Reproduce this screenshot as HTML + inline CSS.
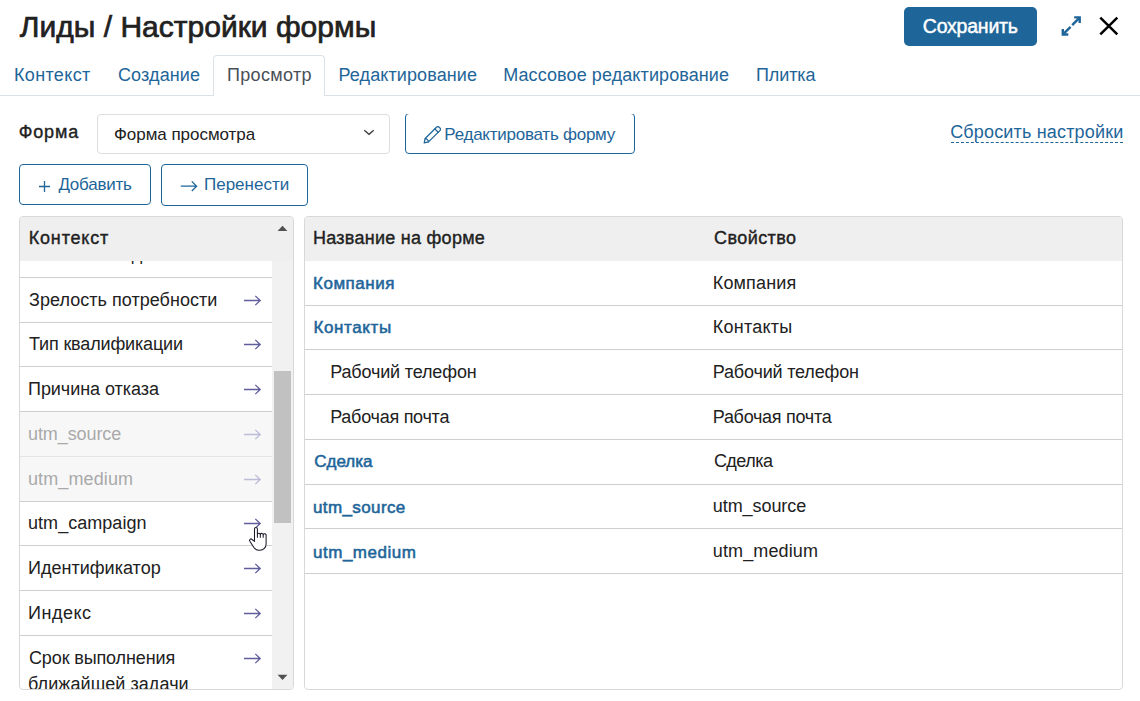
<!DOCTYPE html>
<html lang="ru"><head><meta charset="utf-8"><title>Лиды / Настройки формы</title>
<style>
*{box-sizing:border-box;margin:0;padding:0}
html,body{width:1140px;height:701px;overflow:hidden;background:#fff}
body{font-family:"Liberation Sans",sans-serif;color:#212121;position:relative}
.abs{position:absolute}
.t{position:absolute;white-space:nowrap;line-height:20px}
.tabline{left:0;top:95px;width:1140px;height:1px;background:#dae1e8}
.tabact{left:213px;top:55px;width:112px;height:41px;border:1px solid #dae1e8;border-bottom:none;border-radius:4px 4px 0 0;background:#fff}
.btn-save{left:904px;top:7px;width:133px;height:39px;background:#1e6599;border-radius:5px}
.select{left:97px;top:114px;width:293px;height:40px;border:1px solid #ddd;border-radius:4px;background:#fff}
.btn-o{border:1px solid #1e6599;border-radius:4px;background:#fff}
.panel{border:1px solid #d8d8d8;border-radius:4px;background:#fff;overflow:hidden}
.phead{background:#efefef}
</style></head><body>
<div class="abs btn-save"></div>
<svg class="abs" style="left:1061px;top:16px" width="20" height="20" viewBox="0 0 20 20"><g stroke="#1e6599" stroke-width="2.400" fill="none" stroke-linejoin="miter"><path d="M13.200 1.400H18.700V6.900"/><path d="M18.300 1.800L11.200 9.100"/><path d="M1.800 13V18.500H7.300"/><path d="M2.200 18.100L9.600 10.900"/></g></svg>
<svg class="abs" style="left:1098px;top:16px" width="22" height="21" viewBox="0 0 22 21"><path d="M2.300 1.700L19.300 18.400M19.300 1.700L2.300 18.400" stroke="#000" stroke-width="2.500" fill="none"/></svg>
<div class="abs tabline"></div>
<div class="abs tabact"></div>
<div class="abs select"></div>
<svg class="abs" style="left:363px;top:127.800px" width="12" height="8" viewBox="0 0 12 8"><path d="M1.300 2.200L6 6.300L10.700 2.200" stroke="#3c3c3c" stroke-width="1.300" fill="none"/></svg>
<div class="abs" style="left:405px;top:113px;width:230px;height:41px;overflow:hidden;clip-path:inset(1px 0 0 0)"><div class="abs btn-o" style="left:0;top:0;width:230px;height:41px"></div></div>
<svg class="abs" style="left:423px;top:125px" width="20" height="20" viewBox="0 0 20 20"><g transform="translate(0.5,0.5)" stroke="#1e6599" stroke-width="1.250" fill="none" stroke-linejoin="round" stroke-linecap="round"><path d="M0.700 17.300L1.700 13L13 1.700a1.900 1.900 0 0 1 2.700 0l0.700 0.700a1.900 1.900 0 0 1 0 2.700L5 16.400Z"/><path d="M11.300 3.400L14.700 6.800"/><path d="M1.700 13C3.200 13 5 14.800 5 16.400"/></g></svg>
<div class="abs" style="left:951px;top:142px;width:172px;height:0;border-top:1px dashed #1e6599"></div>
<div class="abs btn-o" style="left:19px;top:164px;width:132px;height:41px"></div>
<div class="abs btn-o" style="left:161px;top:164px;width:147px;height:42px"></div>
<svg class="abs" style="left:39px;top:181px" width="11" height="11" viewBox="0 0 11 11"><path d="M5.500 0V11M0 5.500H11" stroke="#1e6599" stroke-width="1.300" fill="none"/></svg>
<svg class="abs" style="left:179.800px;top:179.500px" width="18" height="12" viewBox="0 0 18 12"><path d="M0.800 6.200H16.500M11.800 1.400L16.600 6.200L11.800 11" stroke="#1e6599" stroke-width="1.300" fill="none"/></svg>
<div class="t" id="title" style="left:19.85px;top:10px;line-height:33px;font-size:30px;color:#212121;letter-spacing:0.008px;-webkit-text-stroke:0.7px #212121">Лиды / Настройки формы</div>
<div class="t" id="save" style="left:922.83px;top:15px;line-height:22px;font-size:19.5px;color:#fff;letter-spacing:-0.224px;-webkit-text-stroke:0.45px #fff">Сохранить</div>
<div class="t" id="t1" style="left:14.00px;top:65px;line-height:20px;font-size:18px;color:#1e6599;letter-spacing:0.348px">Контекст</div>
<div class="t" id="t2" style="left:118.00px;top:65px;line-height:20px;font-size:18px;color:#1e6599;letter-spacing:0.118px">Создание</div>
<div class="t" id="t3" style="left:227.00px;top:65px;line-height:20px;font-size:18px;color:#495057;letter-spacing:0.330px">Просмотр</div>
<div class="t" id="t4" style="left:338.50px;top:65px;line-height:20px;font-size:18px;color:#1e6599;letter-spacing:0.107px">Редактирование</div>
<div class="t" id="t5" style="left:503.20px;top:65px;line-height:20px;font-size:18px;color:#1e6599;letter-spacing:0.095px">Массовое редактирование</div>
<div class="t" id="t6" style="left:756.00px;top:65px;line-height:20px;font-size:18px;color:#1e6599;letter-spacing:-0.102px">Плитка</div>
<div class="t" id="lbl" style="left:18.69px;top:122px;line-height:20px;font-size:18px;color:#212121;letter-spacing:0.860px;-webkit-text-stroke:0.38px #212121">Форма</div>
<div class="t" id="seltxt" style="left:113.90px;top:125px;line-height:19px;font-size:17px;color:#212121;letter-spacing:-0.030px">Форма просмотра</div>
<div class="t" id="edit" style="left:444.30px;top:125px;line-height:19px;font-size:17px;color:#1e6599;letter-spacing:-0.249px">Редактировать форму</div>
<div class="t" id="reset" style="left:950.20px;top:122px;line-height:20px;font-size:18px;color:#1e6599;letter-spacing:0.167px">Сбросить настройки</div>
<div class="t" id="add" style="left:58.40px;top:175px;line-height:19px;font-size:17px;color:#1e6599;letter-spacing:-0.225px">Добавить</div>
<div class="t" id="move" style="left:204.00px;top:175px;line-height:19px;font-size:17px;color:#1e6599;letter-spacing:-0.001px">Перенести</div>

<div class="abs panel" style="left:19px;top:216px;width:275px;height:474px" id="lp">
  <div class="abs" style="left:0;top:44px;width:252px;height:428px;overflow:hidden" id="lpb">
  <div class="abs" style="left:0;top:151px;width:252px;height:89px;background:#f7f7f7"></div>
<div class="abs" style="left:0;top:16px;width:252px;height:1px;background:#cfcfcf"></div>
<div class="abs" style="left:0;top:61px;width:252px;height:1px;background:#cfcfcf"></div>
<div class="abs" style="left:0;top:105px;width:252px;height:1px;background:#cfcfcf"></div>
<div class="abs" style="left:0;top:150px;width:252px;height:1px;background:#cfcfcf"></div>
<div class="abs" style="left:0;top:195px;width:252px;height:1px;background:#e4e4e4"></div>
<div class="abs" style="left:0;top:240px;width:252px;height:1px;background:#cfcfcf"></div>
<div class="abs" style="left:0;top:284px;width:252px;height:1px;background:#cfcfcf"></div>
<div class="abs" style="left:0;top:329px;width:252px;height:1px;background:#cfcfcf"></div>
<div class="abs" style="left:0;top:374px;width:252px;height:1px;background:#cfcfcf"></div>
<svg class="abs" style="left:223.90px;top:33.70px" width="18" height="11" viewBox="0 0 18 11"><path d="M0 5.500H16.200M11.300 0.900L16.200 5.500L11.300 10.100" stroke="#5f5d9c" stroke-width="1.300" fill="none" stroke-linejoin="miter"/></svg>
<svg class="abs" style="left:223.90px;top:78.45px" width="18" height="11" viewBox="0 0 18 11"><path d="M0 5.500H16.200M11.300 0.900L16.200 5.500L11.300 10.100" stroke="#5f5d9c" stroke-width="1.300" fill="none" stroke-linejoin="miter"/></svg>
<svg class="abs" style="left:223.90px;top:123.20px" width="18" height="11" viewBox="0 0 18 11"><path d="M0 5.500H16.200M11.300 0.900L16.200 5.500L11.300 10.100" stroke="#5f5d9c" stroke-width="1.300" fill="none" stroke-linejoin="miter"/></svg>
<svg class="abs" style="left:223.90px;top:167.95px" width="18" height="11" viewBox="0 0 18 11"><path d="M0 5.500H16.200M11.300 0.900L16.200 5.500L11.300 10.100" stroke="#bcbbd8" stroke-width="1.300" fill="none" stroke-linejoin="miter"/></svg>
<svg class="abs" style="left:223.90px;top:212.70px" width="18" height="11" viewBox="0 0 18 11"><path d="M0 5.500H16.200M11.300 0.900L16.200 5.500L11.300 10.100" stroke="#bcbbd8" stroke-width="1.300" fill="none" stroke-linejoin="miter"/></svg>
<svg class="abs" style="left:223.90px;top:257.45px" width="18" height="11" viewBox="0 0 18 11"><path d="M0 5.500H16.200M11.300 0.900L16.200 5.500L11.300 10.100" stroke="#5f5d9c" stroke-width="1.300" fill="none" stroke-linejoin="miter"/></svg>
<svg class="abs" style="left:223.90px;top:302.20px" width="18" height="11" viewBox="0 0 18 11"><path d="M0 5.500H16.200M11.300 0.900L16.200 5.500L11.300 10.100" stroke="#5f5d9c" stroke-width="1.300" fill="none" stroke-linejoin="miter"/></svg>
<svg class="abs" style="left:223.90px;top:346.95px" width="18" height="11" viewBox="0 0 18 11"><path d="M0 5.500H16.200M11.300 0.900L16.200 5.500L11.300 10.100" stroke="#5f5d9c" stroke-width="1.300" fill="none" stroke-linejoin="miter"/></svg>
<svg class="abs" style="left:223.90px;top:391.70px" width="18" height="11" viewBox="0 0 18 11"><path d="M0 5.500H16.200M11.300 0.900L16.200 5.500L11.300 10.100" stroke="#5f5d9c" stroke-width="1.300" fill="none" stroke-linejoin="miter"/></svg>
  <div class="t" id="l0" style="left:9.00px;top:-17px;line-height:20px;font-size:18px;color:#212121;letter-spacing:0.041px">Источник лида</div>
<div class="t" id="l1" style="left:9.00px;top:29px;line-height:20px;font-size:18px;color:#212121;letter-spacing:0.036px">Зрелость потребности</div>
<div class="t" id="l2" style="left:9.00px;top:73px;line-height:20px;font-size:18px;color:#212121;letter-spacing:-0.155px">Тип квалификации</div>
<div class="t" id="l3" style="left:8.00px;top:118px;line-height:20px;font-size:18px;color:#212121;letter-spacing:-0.045px">Причина отказа</div>
<div class="t" id="l4" style="left:8.00px;top:163px;line-height:20px;font-size:18px;color:#a9a9a9;letter-spacing:-0.087px">utm_source</div>
<div class="t" id="l5" style="left:8.00px;top:208px;line-height:20px;font-size:18px;color:#a9a9a9;letter-spacing:0.106px">utm_medium</div>
<div class="t" id="l6" style="left:8.00px;top:252px;line-height:20px;font-size:18px;color:#212121;letter-spacing:0.041px">utm_campaign</div>
<div class="t" id="l7" style="left:8.00px;top:297px;line-height:20px;font-size:18px;color:#212121;letter-spacing:0.017px">Идентификатор</div>
<div class="t" id="l8" style="left:8.00px;top:342px;line-height:20px;font-size:18px;color:#212121;letter-spacing:0.506px">Индекс</div>
<div class="t" id="l9" style="left:9.00px;top:387px;line-height:20px;font-size:18px;color:#212121;letter-spacing:-0.129px">Срок выполнения</div>
<div class="t" id="l10" style="left:8.00px;top:413px;line-height:20px;font-size:18px;color:#212121;letter-spacing:0.078px">ближайшей задачи</div>
  </div>
  <div class="abs phead" style="left:0;top:0;width:273px;height:44px"></div>
  <div class="abs" style="left:252px;top:44px;width:21px;height:430px;background:#f1f1f1"></div>
  <div class="abs" style="left:254px;top:154px;width:17px;height:152px;background:#c1c1c1"></div>
  <svg class="abs" style="left:257px;top:8px" width="11" height="7" viewBox="0 0 11 7"><path d="M0.600 6L5.500 0.800L10.400 6Z" fill="#505050"/></svg>
  <svg class="abs" style="left:257px;top:457px" width="11" height="7" viewBox="0 0 11 7"><path d="M0.600 0.800L5.500 6L10.400 0.800Z" fill="#505050"/></svg>
  <div class="t" id="lh" style="left:8.69px;top:11px;line-height:20px;font-size:18px;color:#212121;letter-spacing:0.836px;-webkit-text-stroke:0.38px #212121">Контекст</div>
</div>
<div class="abs panel" style="left:304px;top:216px;width:819px;height:474px" id="rp">
  <div class="abs phead" style="left:0;top:0;width:817px;height:44px"></div>
  <div class="abs" style="left:0;top:88px;width:817px;height:1px;background:#cfcfcf"></div>
<div class="abs" style="left:0;top:132px;width:817px;height:1px;background:#cfcfcf"></div>
<div class="abs" style="left:0;top:177px;width:817px;height:1px;background:#cfcfcf"></div>
<div class="abs" style="left:0;top:222px;width:817px;height:1px;background:#cfcfcf"></div>
<div class="abs" style="left:0;top:267px;width:817px;height:1px;background:#cfcfcf"></div>
<div class="abs" style="left:0;top:311px;width:817px;height:1px;background:#cfcfcf"></div>
<div class="abs" style="left:0;top:356px;width:817px;height:1px;background:#cfcfcf"></div>
  <div class="t" id="rh1" style="left:7.94px;top:11px;line-height:20px;font-size:18px;color:#212121;letter-spacing:0.267px;-webkit-text-stroke:0.38px #212121">Название на форме</div>
<div class="t" id="rh2" style="left:408.94px;top:11px;line-height:20px;font-size:18px;color:#212121;letter-spacing:0.442px;-webkit-text-stroke:0.38px #212121">Свойство</div>
<div class="t" id="a1" style="left:8.02px;top:57px;line-height:19px;font-size:17px;color:#1e6599;letter-spacing:0.516px;-webkit-text-stroke:0.55px #1e6599">Компания</div>
<div class="t" id="a2" style="left:8.38px;top:101px;line-height:19px;font-size:17px;color:#1e6599;letter-spacing:0.620px;-webkit-text-stroke:0.55px #1e6599">Контакты</div>
<div class="t" id="a3" style="left:25.25px;top:145px;line-height:20px;font-size:18px;color:#212121;letter-spacing:-0.152px">Рабочий телефон</div>
<div class="t" id="a4" style="left:25.20px;top:190px;line-height:20px;font-size:18px;color:#212121;letter-spacing:-0.255px">Рабочая почта</div>
<div class="t" id="a5" style="left:9.17px;top:235px;line-height:19px;font-size:17px;color:#1e6599;letter-spacing:0.027px;-webkit-text-stroke:0.55px #1e6599">Сделка</div>
<div class="t" id="a6" style="left:8.02px;top:281px;line-height:19px;font-size:17px;color:#1e6599;letter-spacing:0.382px;-webkit-text-stroke:0.55px #1e6599">utm_source</div>
<div class="t" id="a7" style="left:8.02px;top:326px;line-height:19px;font-size:17px;color:#1e6599;letter-spacing:0.512px;-webkit-text-stroke:0.55px #1e6599">utm_medium</div>
<div class="t" id="b1" style="left:407.75px;top:56px;line-height:20px;font-size:18px;color:#212121;letter-spacing:0.161px">Компания</div>
<div class="t" id="b2" style="left:407.75px;top:100px;line-height:20px;font-size:18px;color:#212121;letter-spacing:0.241px">Контакты</div>
<div class="t" id="b3" style="left:407.75px;top:145px;line-height:20px;font-size:18px;color:#212121;letter-spacing:-0.169px">Рабочий телефон</div>
<div class="t" id="b4" style="left:407.75px;top:190px;line-height:20px;font-size:18px;color:#212121;letter-spacing:-0.272px">Рабочая почта</div>
<div class="t" id="b5" style="left:408.90px;top:234px;line-height:20px;font-size:18px;color:#212121;letter-spacing:-0.518px">Сделка</div>
<div class="t" id="b6" style="left:407.75px;top:279px;line-height:20px;font-size:18px;color:#212121;letter-spacing:-0.065px">utm_source</div>
<div class="t" id="b7" style="left:407.75px;top:324px;line-height:20px;font-size:18px;color:#212121;letter-spacing:0.134px">utm_medium</div>
</div>
<svg class="abs" style="left:248px;top:526px" width="21" height="27" viewBox="0 0 21 27"><path d="M6.500 15.400V3a1.450 1.450 0 0 1 2.900 0V8.600a1.450 1.450 0 0 1 2.900 0.100a1.450 1.450 0 0 1 2.900 0.300a1.450 1.450 0 0 1 2.900 0.500V18c0 3.600-2.600 6.200-6.100 6.200h-1.300c-2.300 0-3.800-1.200-5-3L1.900 15.200a1.350 1.350 0 0 1 2.100-1.700Z" fill="#fff" stroke="#1a1a2a" stroke-width="1.050" stroke-linejoin="round"/><path d="M9.400 8.600V11.800M12.300 8.700V11.800M15.200 9V11.800" stroke="#1a1a2a" stroke-width="1" fill="none"/></svg>
</body></html>
